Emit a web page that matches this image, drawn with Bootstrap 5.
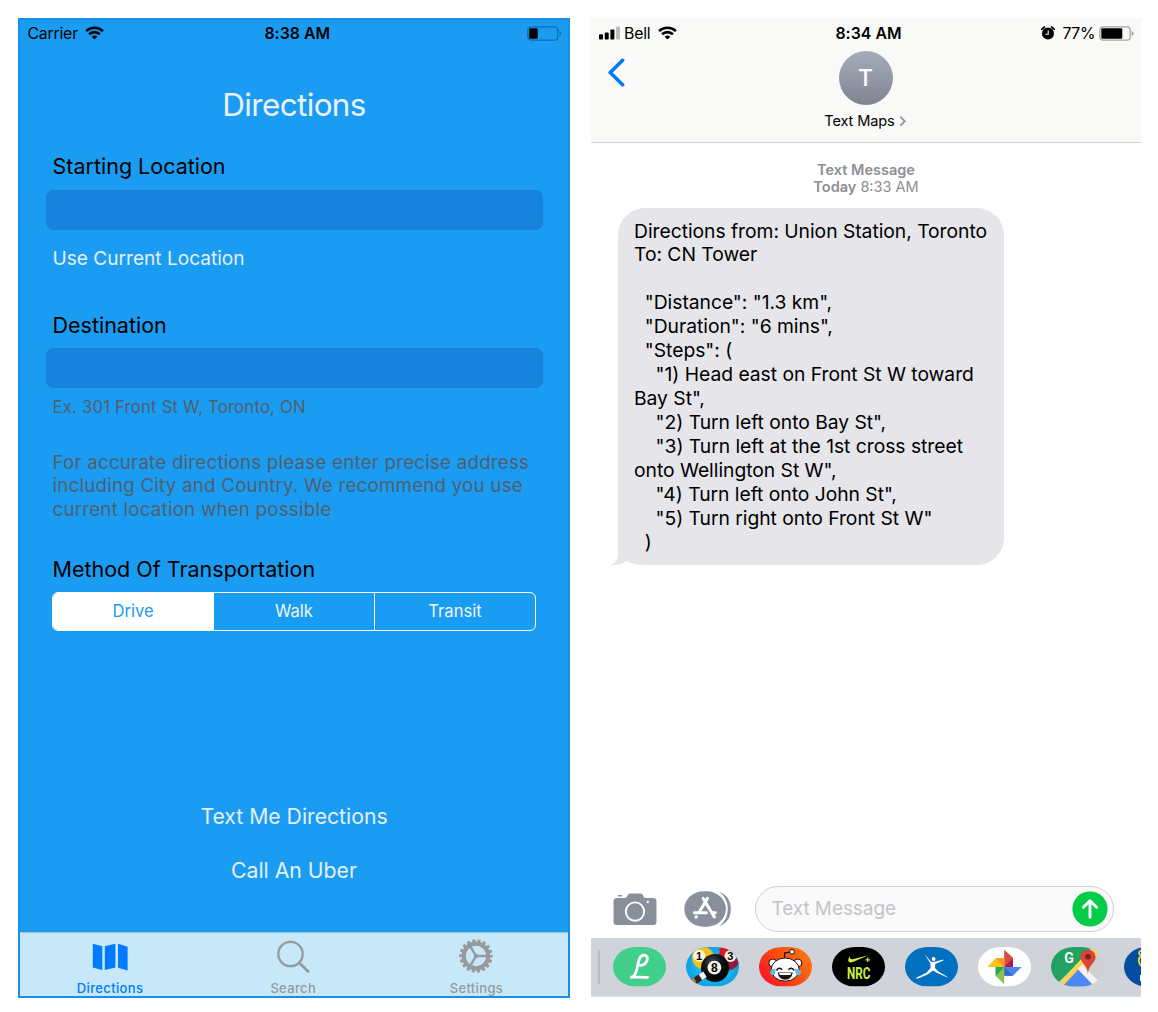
<!DOCTYPE html>
<html lang="en">
<head>
<meta charset="utf-8">
<meta name="viewport" content="width=device-width, initial-scale=1">
<title>Text Maps</title>
<link href="https://cdn.jsdelivr.net/npm/bootstrap@5.3.0/dist/css/bootstrap.min.css" rel="stylesheet">
<style>
body { font-family: Inter, "Liberation Sans", sans-serif; background: #fff; color: #000; }
svg { display: block; flex: none; }
.stage { padding: 18px 17px 0 18px; gap: 21px; height: 1012px; overflow: hidden; white-space: nowrap; }
.phone-app { width: 552px; height: 980px; background: #1b9cf3; border: 2px solid #1a8fe8; }
.phone-sms { width: 550px; height: 979px; background: #fff; }
.status { height: 26px; font-size: 15.8px; line-height: 26px; letter-spacing: -.2px; }
.status .side { flex: 1 1 0; }
.status span { position: relative; top: .5px; }
.clock { font-weight: 600; letter-spacing: .05px; margin-left: 5px; }
.app-status { padding: 0 6px 0 7.5px; }
.app-title { margin-top: 39px; height: 40px; line-height: 41px; font-size: 31.4px; letter-spacing: -.6px; color: #ecf1fa; }
.app-form { padding: 0 25.5px; }
.field-title { font-size: 21.5px; line-height: 28px; height: 28px; padding-left: 7px; letter-spacing: 0; }
.app-form .form-control { height: 40px; border-radius: 7px; border: 1px solid #1980d6; background: #1883dc; }
.text-btn { font-size: 19.1px; line-height: 24px; height: 24px; color: #e5effa; border: 0; background: none; padding: 0 0 0 7px; text-align: left; }
.hint { color: #505f6c; font-size: 16.7px; line-height: 20px; padding-left: 7px; letter-spacing: .2px; }
.note { color: #505f6c; font-size: 18.7px; line-height: 23.8px; padding-left: 7px; letter-spacing: .24px; margin: 34px 0 0; }
.modes { width: 484px; height: 39px; margin: 9px 0 0 6.5px; border: 1.5px solid #fff; border-radius: 6px; overflow: hidden; }
.modes .btn { flex: 1 1 0; padding: 0; border: 0; border-radius: 0; color: #eef6fe; font-size: 16.6px; line-height: 37px; }
.modes .btn + .btn { border-left: 1.5px solid #fff; }
.modes .btn.active { background: #fff; color: #1b9cf3; }
.big-link { font-size: 21.2px; line-height: 30px; height: 30px; color: #e5effa; border: 0; background: none; padding: 0; }
.tabs { height: 64px; background: #c6e8f9; border-top: 1px solid #92c6e4; }
.tabs .nav-link { flex: 1 1 0; padding: 6px 0 0; color: #969a9c; font-size: 13px; font-weight: 500; letter-spacing: .35px; line-height: 16px; border-radius: 0; }
.tabs .nav-link.active { color: #007aff; background: none; margin-left: -1.5px; }
.tabs svg { margin-bottom: 7px; }
.sms-nav { height: 125px; background: #f9f9f8; border-bottom: 1px solid #d2d2d1; }
.sms-status { padding: 0 7px 0 8px; height: 30px; line-height: 30px; }
.sms-status .clock { margin-left: 4px; }
.sms-head { margin-top: 3px; }
.avatar { width: 54px; height: 54px; border-radius: 50%; background: linear-gradient(#a5acbb, #81848f); color: #fff; font-size: 23px; font-weight: 500; }
.contact { font-size: 14.6px; line-height: 20px; margin-top: 6px; letter-spacing: -.15px; }
.stamp { margin-top: 17.5px; font-size: 14.5px; line-height: 17.5px; color: #8e8e93; }
.bubble { position: relative; width: 386px; height: 357px; margin: 12px 0 0 27px; padding: 12px 16px; background: #e5e5ea; border-radius: 27px; font-size: 19.3px; line-height: 23.95px; letter-spacing: -.03px; white-space: pre; }
.bubble svg { position: absolute; left: -7px; bottom: 0; }
.composer { height: 46px; padding: 0 27.5px 0 22px; }
.compose-box { width: 359px; height: 46px; border: 1.5px solid #cfd0d3; border-radius: 23px; background: #fafafa; color: #c4c4c8; font-size: 19px; letter-spacing: -.08px; padding: 0 4.5px 0 16px; }
.compose-box span { padding-top: 1px; }
.tray { height: 59px; background: #d1d3da; margin-top: 6px; gap: 20px; overflow: hidden; padding-left: 7px; border-bottom: 1px solid #dddee2; }
.tray-rule { width: 2px; height: 34px; background: #b9bbc1; margin-right: -7.5px; flex: none; }
</style>
</head>
<body>
<svg width="0" height="0" class="position-absolute" aria-hidden="true">
  <defs>
    <symbol id="wifi" viewBox="0 0 18 13">
      <g fill="none" stroke="currentColor" stroke-width="2.5"><path d="M.9 4.9a11.7 11.7 0 0 1 16.2 0"/><path d="M3.8 8a7.5 7.5 0 0 1 10.4 0"/></g>
      <path d="M9 13 6.2 10.4a4.1 4.1 0 0 1 5.6 0z" fill="currentColor"/>
    </symbol>
    <clipPath id="pill"><rect width="53" height="39.5" rx="22.5" ry="19.75"/></clipPath>
    <linearGradient id="rd" x1="0" y1=".8" x2="1" y2=".2"><stop stop-color="#f8102c"/><stop offset=".5" stop-color="#fb4b0a"/><stop offset="1" stop-color="#ff7a16"/></linearGradient>
    <radialGradient id="pool"><stop stop-color="#35cdf5"/><stop offset="1" stop-color="#0da2e6"/></radialGradient>
    <radialGradient id="blk" cx=".4" cy=".3"><stop stop-color="#4a4f58"/><stop offset=".6" stop-color="#15171b"/><stop offset="1" stop-color="#050607"/></radialGradient>
  </defs>
</svg>

<main class="stage d-flex align-items-start">
  <section class="phone-app d-flex flex-column">
    <div class="status app-status d-flex align-items-center">
      <div class="side d-flex align-items-center"><span>Carrier</span><svg width="19" height="13.5" style="margin-left:7px"><use href="#wifi"/></svg></div>
      <span class="clock">8:38 AM</span>
      <div class="side d-flex justify-content-end">
        <svg width="35" height="15" viewBox="0 0 35 15"><rect x=".8" y=".8" width="30" height="13.4" rx="3.2" fill="none" stroke="#126cab" stroke-width="1.3"/><rect x="2.2" y="2.3" width="8.6" height="10.4" rx="1.2"/><path d="M32.5 5v5q2-.8 2-2.5t-2-2.5z" fill="#126cab"/></svg>
      </div>
    </div>
    <h1 class="app-title text-center fw-normal mb-0">Directions</h1>

    <div class="app-form d-flex flex-column">
      <label class="field-title" for="from" style="margin-top:27px">Starting Location</label>
      <input id="from" class="form-control" style="margin-top:9.5px">
      <button class="text-btn" style="margin-top:16px">Use Current Location</button>
      <label class="field-title" for="to" style="margin-top:41px">Destination</label>
      <input id="to" class="form-control" style="margin-top:9px">
      <div class="hint" style="margin-top:9px">Ex. 301 Front St W, Toronto, ON</div>
      <p class="note">For accurate directions please enter precise address<br>including City and Country. We recommend you use<br>current location when possible</p>
      <div class="field-title" style="margin-top:33px">Method Of Transportation</div>
      <div class="modes d-flex" role="group">
        <button class="btn active">Drive</button>
        <button class="btn">Walk</button>
        <button class="btn">Transit</button>
      </div>
    </div>

    <div class="mt-auto d-flex flex-column align-items-center" style="gap:24px;padding-bottom:47px">
      <button class="big-link">Text Me Directions</button>
      <button class="big-link">Call An Uber</button>
    </div>

    <nav class="tabs nav flex-nowrap">
      <a class="nav-link active d-flex flex-column align-items-center">
        <svg width="36" height="34" viewBox="0 0 36 34" fill="currentColor"><path d="M.8 4.7 10.3 7.3V31L.8 28.6zM12.8 7.3 23.4 4.7V28.6L12.8 31zM26 4.8 35.6 7.8V31.4L26 28.8z"/></svg>
        Directions</a>
      <a class="nav-link d-flex flex-column align-items-center">
        <svg width="34" height="34" viewBox="0 0 34 34" fill="none" stroke="currentColor" stroke-width="2.3"><circle cx="14.5" cy="15" r="12.2"/><path d="M23.3 23.8 32.8 33.2" stroke-width="2.8"/></svg>
        Search</a>
      <a class="nav-link d-flex flex-column align-items-center">
        <svg width="34" height="34" viewBox="0 0 34 34" fill="none" stroke="currentColor"><circle cx="17" cy="17" r="12.3" stroke-width="4.2"/><circle cx="17" cy="17" r="15" stroke-width="3.4" stroke-dasharray="2.9 2.336" stroke-dashoffset="1.45"/><path d="M17 17H29M17 17 11 6.8M17 17 11 27.2" stroke-width="2.4"/><circle cx="17" cy="17" r="1.8" fill="currentColor"/></svg>
        Settings</a>
    </nav>
  </section>

  <section class="phone-sms d-flex flex-column">
    <header class="sms-nav">
      <div class="status sms-status d-flex align-items-center">
        <div class="side d-flex align-items-center">
          <svg width="21" height="14" viewBox="0 0 21 14"><rect y="8.3" width="4" height="5.2" rx="1"/><rect x="5.7" y="6.4" width="4" height="7.1" rx="1"/><rect x="11.4" y="3.6" width="4" height="9.9" rx="1"/><rect x="17" y=".6" width="4" height="12.9" rx="1" fill="#bdbdbd"/></svg>
          <span style="margin-left:4px">Bell</span>
          <svg width="19" height="13.5" style="margin-left:8px"><use href="#wifi"/></svg>
        </div>
        <span class="clock">8:34 AM</span>
        <div class="side d-flex align-items-center justify-content-end">
          <svg width="14" height="14" viewBox="0 0 14 14"><circle cx="7" cy="7.6" r="6"/><path d="M.7 3.4 3.4 1M13.3 3.4 10.6 1" stroke="#000" stroke-width="1.7" stroke-linecap="round"/><path d="M7.2 4.4V8.2H4.4" fill="none" stroke="#f9f9f8" stroke-width="1.1"/></svg>
          <span style="margin:0 4px 0 7.5px;letter-spacing:-.4px">77%</span>
          <svg width="35" height="15" viewBox="0 0 35 15"><rect x=".8" y=".8" width="30.4" height="13.4" rx="3.2" fill="none" stroke="#a5a5a3" stroke-width="1.3"/><rect x="2.3" y="2.3" width="21" height="10.4" rx="1.2"/><path d="M32.7 5v5q2-.8 2-2.5t-2-2.5z" fill="#a5a5a3"/></svg>
        </div>
      </div>
      <div class="sms-head d-flex">
        <div style="width:100px;padding:7px 0 0 17px"><svg width="18" height="29" viewBox="0 0 18 29" fill="none" stroke="#007aff" stroke-width="3.6" stroke-linecap="round" stroke-linejoin="round"><path d="M14.6 2.3 2.2 14.5 14.6 26.7"/></svg></div>
        <div class="flex-grow-1 d-flex flex-column align-items-center">
          <div class="avatar d-flex align-items-center justify-content-center">T</div>
          <div class="contact d-flex align-items-center">Text Maps<svg width="8" height="12" viewBox="0 0 8 12" fill="none" stroke="#8d95a3" stroke-width="1.8" style="margin-left:4px"><path d="M1.2 1.7 5.8 6.2 1.2 10.7"/></svg></div>
        </div>
        <div style="width:101px"></div>
      </div>
    </header>

    <div class="stamp text-center"><span class="fw-semibold">Text Message</span><br><span class="fw-semibold">Today</span> 8:33 AM</div>
    <div class="bubble">Directions from: Union Station, Toronto
To: CN Tower

  "Distance": "1.3 km",
  "Duration": "6 mins",
  "Steps": (
    "1) Head east on Front St W toward
Bay St",
    "2) Turn left onto Bay St",
    "3) Turn left at the 1st cross street
onto Wellington St W",
    "4) Turn left onto John St",
    "5) Turn right onto Front St W"
  )<svg width="36" height="30" viewBox="0 0 36 30" fill="#e5e5ea"><path d="M7 0V20Q7 26.5 0 30Q9 30.6 16 25.5Q22 30 33 30L30 0z"/></svg></div>

    <div class="mt-auto">
      <div class="composer d-flex align-items-center">
        <svg width="44" height="33" viewBox="0 0 44 33" fill="#89909b"><path d="M4 5H12Q13.5 5 14.2 3.2L15 1.6Q15.7 .4 17 .4H27.5Q28.8 .4 29.5 1.6L30.3 3.2Q31 5 32.5 5H40Q43.5 5 43.5 8.5V28.5Q43.5 32 40 32H4Q.5 32 .5 28.5V8.5Q.5 5 4 5zM5 2H9.2V3.6H5z"/><circle cx="22" cy="18.6" r="9.2" fill="none" stroke="#fff" stroke-width="1.9"/><circle cx="34.8" cy="9" r="1.2" fill="#fff"/></svg>
        <svg width="47" height="36" viewBox="0 0 47 36" style="margin-left:27px"><path d="M35 .8Q46.8 5 46.8 18T35 35.2Q43.8 29 43.8 18T35 .8z" fill="#89909b"/><rect x=".3" y=".3" width="41.6" height="35.4" rx="19" ry="17.7" fill="#89909b"/><g fill="none" stroke="#fff" stroke-width="3" stroke-linecap="round"><path d="M23.4 7.4 14.8 21.7M19.2 7.4 30.4 26M10.4 21.8H22.5M28.6 21.8H31.3M12.4 25.6 12 26.2"/></g></svg>
        <div class="compose-box ms-auto d-flex align-items-center justify-content-between"><span>Text Message</span>
          <svg width="36" height="36" viewBox="0 0 36 36"><circle cx="18" cy="18" r="17.6" fill="#04cc47"/><path d="M18 26.3V10.5M11.4 16.3 18 9.8 24.6 16.3" fill="none" stroke="#fff" stroke-width="2.9" stroke-linecap="round" stroke-linejoin="round"/></svg>
        </div>
      </div>

      <div class="tray d-flex align-items-center">
        <div class="tray-rule"></div>
        <svg width="53" height="39.5" viewBox="0 0 53 39.5"><g clip-path="url(#pill)"><rect width="53" height="39.5" fill="#42cf8b"/><path d="M27.5 18.4C34.5 18 37 8.200 31 8.200C25.600 8.200 25.300 16.500 23.800 22.500C22.800 27 21 30 17.400 30.300C22 29.400 29 30.600 34.600 30.300" fill="none" stroke="#fff" stroke-width="2.800" stroke-linecap="round"/></g></svg>
        <svg width="53" height="39.5" viewBox="0 0 53 39.5" font-family="Liberation Sans, sans-serif" font-weight="700"><g clip-path="url(#pill)"><rect width="53" height="39.5" fill="url(#pool)"/><circle cx="17" cy="10.8" r="11" fill="#f5c21b"/><circle cx="13.2" cy="8.8" r="6" fill="#fff9dc"/><text x="13" y="12.8" font-size="11" text-anchor="middle">1</text><circle cx="42.5" cy="12" r="11" fill="#8e1c3c"/><path d="M31.6 12A11 11 0 0 1 41 1L38 10z" fill="#e5141f"/><path d="M33 2Q38-2 43 1L41 5 35 7z" fill="#e5141f"/><circle cx="44.4" cy="9" r="6" fill="#f5efe4"/><text x="44.4" y="13" font-size="11" text-anchor="middle">3</text><circle cx="29" cy="21" r="14" fill="url(#blk)"/><circle cx="28.4" cy="20.6" r="6.9" fill="#f6f2e4"/><text x="28.4" y="24.8" font-size="12" text-anchor="middle">8</text><path d="M4 37 18 28" stroke="#33231c" stroke-width="6.6"/><path d="M4 36 9 32.8" stroke="#c48538" stroke-width="5"/><path d="M14.5 30.2 19 27.3" stroke="#f1f2f4" stroke-width="6.4"/></g></svg>
        <svg width="53" height="39.5" viewBox="0 0 53 39.5"><g clip-path="url(#pill)"><rect width="53" height="39.5" fill="url(#rd)"/><g fill="#fff" stroke="#1c0d0a" stroke-width="1"><path d="M25.6 11.5V6L31.5 4.8" fill="none" stroke-width="1.3"/><circle cx="33" cy="4.8" r="2.4"/><circle cx="13.8" cy="16" r="4"/><circle cx="38.8" cy="16" r="4"/><ellipse cx="26.2" cy="22.6" rx="14" ry="11.6"/></g><path d="M17.4 23.5Q20 19.5 23.2 22.6M29.4 22.6Q32.5 19.5 35.2 23.5" fill="none" stroke="#111" stroke-width="1.5"/><path d="M18.6 25.6H33.8Q32.5 32.8 26.2 32.8T18.6 25.6z" fill="#1c1414"/><path d="M20 26H32.4L31.4 28H21z" fill="#fff"/><path d="M16.5 21.5Q10 22.5 11.3 26.5Q13.5 30 16.3 26.5zM36 21.5Q43.5 22.5 42 26.5Q39 30 36.6 26.5z" fill="#5db8ee"/></g></svg>
        <svg width="53" height="39.5" viewBox="0 0 53 39.5"><g clip-path="url(#pill)"><rect width="53" height="39.5" fill="#000"/><path d="M18 9Q14.6 13.8 17.5 15.2Q19 15.8 21.5 14.8L36.5 8.2 21.5 12Q17 12.8 18 9z" fill="#c8f03a"/><path d="M35.7 10.600V15M33.500 12.800H37.900" stroke="#c8f03a" stroke-width="1.200"/><text x="15" y="32" font-family="Roboto, sans-serif" font-weight="700" font-size="17" textLength="23.500" lengthAdjust="spacingAndGlyphs" fill="#c8f03a">NRC</text></g></svg>
        <svg width="53" height="39.5" viewBox="0 0 53 39.5"><g clip-path="url(#pill)"><rect width="53" height="39.5" fill="#0270bf"/><g fill="#fff"><circle cx="28.6" cy="12" r="1.9"/><path d="M19.6 7 26.3 14.9 30.500 14.400 38.600 12.600 38.400 13.600 30.300 17 30 21 33 24.200 42.600 29.900 41.800 30.300 31.800 25.800 28 23.600 22.500 27.500 12.400 31.800 10.800 31 21.400 25.800 25.600 21 25.400 16.600z"/></g></g></svg>
        <svg width="53" height="39.5" viewBox="0 0 53 39.5"><g clip-path="url(#pill)"><rect width="53" height="39.5" fill="#fff"/><path d="M26.2 2.8 35 10.8V20H26.2z" fill="#db4a3e"/><path d="M35 11V20H26.2z" fill="#a81c5d"/><path d="M9.500 20 17.700 11.200H26.200V20z" fill="#fcc21b"/><path d="M17.700 11.200H26.200V20z" fill="#f49a17"/><path d="M43.500 20 35 28.700H26.200V20z" fill="#4a86f0"/><path d="M26.200 20V28.700H35z" fill="#3569c8"/><path d="M26.200 37.200 17.700 29V20H26.200z" fill="#8cc34b"/><path d="M17.700 29V20H26.200z" fill="#27a55b"/></g></svg>
        <svg width="53" height="39.5" viewBox="0 0 53 39.5"><g clip-path="url(#pill)"><rect width="53" height="39.5" fill="#cfcfcf"/><path d="M0 0H43L0 43z" fill="#22a163"/><path d="M41 0H46L47 7 10 41 4 41z" fill="#fcd24a"/><path d="M27.300 22.500 45 41H10z" fill="#4b88f2"/><path d="M26.500 21.700 31 17.500 53 39.500H43.500z" fill="#f1f1f1"/><path d="M36.900 27Q36.500 20.500 32 16A7.600 7.600 0 1 1 42 16Q37.400 20.500 36.900 27z" fill="#db4437"/><circle cx="37" cy="9.800" r="2.800" fill="#7a211b"/><text x="18" y="15.600" text-anchor="middle" font-family="Roboto, sans-serif" font-weight="700" font-size="14" fill="#f2fff6">G</text></g></svg>
        <svg width="53" height="39.5" viewBox="0 0 53 39.5"><g clip-path="url(#pill)"><rect width="53" height="39.5" fill="#034ea2"/><path d="M18 3Q13 5 16.500 8.500M17 9Q12.500 13 17 19" fill="none" stroke="#f4dc2e" stroke-width="1.800"/><path d="M17 28V34" stroke="#fff" stroke-width="2"/></g></svg>
      </div>
    </div>
  </section>
</main>
<script src="https://cdn.jsdelivr.net/npm/bootstrap@5.3.0/dist/js/bootstrap.bundle.min.js"></script>
</body>
</html>
